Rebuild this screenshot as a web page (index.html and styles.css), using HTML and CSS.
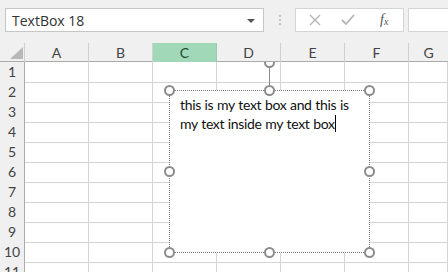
FILE: index.html
```html
<!DOCTYPE html>
<html lang="en">
<head>
    <meta charset="UTF-8">
    <title>TextBox 18</title>
    <link rel="stylesheet" href="styles.css">
</head>
<body>
    <div class="toolbar">
        <div class="name-box">
            <span class="name-text">TextBox 18</span>
            <span class="arrow"></span>
        </div>
        <div class="grip"><i></i><i></i><i></i></div>
        <div class="fx-buttons">
            <svg class="btn" width="12" height="12" viewBox="0 0 12 12"><path d="M1 1 L11 11 M11 1 L1 11" stroke="#b4b4b4" stroke-width="1.4" fill="none"/></svg>
            <svg class="btn" width="14" height="12" viewBox="0 0 14 12"><path d="M1 6 L5 10 L13 1" stroke="#b4b4b4" stroke-width="1.8" fill="none"/></svg>
            <span class="fx">f<sub>x</sub></span>
        </div>
        <div class="formula"></div>
    </div>

    <div class="sheet">
        <div class="head-row">
            <div class="corner"><span class="tri"></span></div>
            <div class="col-head">A</div>
            <div class="col-head">B</div>
            <div class="col-head selected">C</div>
            <div class="col-head">D</div>
            <div class="col-head">E</div>
            <div class="col-head">F</div>
            <div class="col-head last">G</div>
        </div>
        <div class="rows" id="rows">
            <div class="textbox">
                <div class="rotate-line"></div>
                <span class="handle h-rot"></span>
                <span class="handle h-tl"></span>
                <span class="handle h-tm"></span>
                <span class="handle h-tr"></span>
                <span class="handle h-ml"></span>
                <span class="handle h-mr"></span>
                <span class="handle h-bl"></span>
                <span class="handle h-bm"></span>
                <span class="handle h-br"></span>
                <p class="tb-text">this is my text box and this is my text inside my text box<span class="caret"></span></p>
            </div>
        </div>
    </div>

    <script>
        // строки таблицы 1..11
        const rows = document.getElementById('rows');
        for (let i = 1; i <= 11; i++) {
            const row = document.createElement('div');
            row.className = 'row';
            let html = '<div class="row-head">' + i + '</div>';
            for (let c = 0; c < 7; c++) {
                html += '<div class="cell"></div>';
            }
            row.innerHTML = html;
            rows.appendChild(row);
        }
    </script>
</body>
</html>
```

FILE: styles.css
```css
* {
    margin: 0;
    padding: 0;
    box-sizing: border-box;
}

body {
    width: 448px;
    height: 272px;
    overflow: hidden;
    background: #ffffff;
    font-family: Lato, 'Open Sans', sans-serif;
}

.toolbar {
    height: 43px;
    background: #f0f0f0;
    display: flex;
    align-items: flex-start;
    padding: 8px 0 0 5px;
}

.name-box {
    width: 259px;
    height: 24px;
    background: white;
    border: 1px solid #c6c6c6;
    display: flex;
    align-items: center;
    justify-content: space-between;
    padding: 0 8px 0 6px;
}

.name-text {
    font-family: 'Open Sans', sans-serif;
    font-size: 14px;
    color: #333;
}

.arrow {
    width: 0;
    height: 0;
    border-left: 4px solid transparent;
    border-right: 4px solid transparent;
    border-top: 4px solid #555;
    margin-top: 1px;
}

.grip {
    width: 31px;
    display: flex;
    flex-direction: column;
    align-items: center;
    gap: 2px;
    padding-top: 7px;
}

.grip i {
    width: 2px;
    height: 2px;
    background: #c4c4c4;
}

.fx-buttons {
    width: 109px;
    height: 24px;
    background: white;
    border: 1px solid #d4d4d4;
    display: flex;
    align-items: center;
    padding-left: 13px;
}

.btn {
    display: block;
}

.btn + .btn {
    margin-left: 20px;
}

.fx {
    margin-left: 25px;
    font-family: 'Liberation Serif', serif;
    font-style: italic;
    font-size: 14px;
    color: #555;
}

.fx sub {
    font-size: 10px;
    vertical-align: -1px;
}

.formula {
    flex: 1;
    height: 24px;
    margin-left: 4px;
    background: white;
    border: 1px solid #d4d4d4;
    border-right: none;
}

.sheet {
    position: relative;
}

.head-row {
    display: grid;
    grid-template-columns: 25px repeat(6, 64px) 1fr;
    height: 19px;
    background: #f0f0f0;
    border-bottom: 1px solid #ababab;
    position: relative;
    z-index: 2;
}

.corner {
    position: relative;
    border-right: 1px solid #d0d0d0;
}

.tri {
    position: absolute;
    left: 10px;
    top: 4px;
    width: 0;
    height: 0;
    border-left: 13px solid transparent;
    border-bottom: 12px solid #b8b8b8;
}

.col-head {
    border-right: 1px solid #d0d0d0;
    text-align: center;
    font-size: 14px;
    line-height: 19px;
    color: #444;
}

.col-head.selected {
    background: #a0d8b8;
    color: #1f4a33;
    border-right-color: #9cc8ae;
}

.col-head.last {
    border-right: none;
}

.rows {
    position: relative;
    overflow: hidden;
    height: 210px;
}

.row {
    display: grid;
    grid-template-columns: 25px repeat(6, 64px) 1fr;
    height: 20px;
}

.row-head {
    background: #f0f0f0;
    border-right: 1px solid #ababab;
    border-bottom: 1px solid #d4d4d4;
    text-align: center;
    font-size: 14px;
    line-height: 20px;
    color: #444;
}

.cell {
    border-right: 1px solid #d4d4d4;
    border-bottom: 1px solid #d4d4d4;
}

/* текстовое поле поверх ячеек */
.textbox {
    position: absolute;
    left: 169px;
    top: 28px;
    width: 201px;
    height: 163px;
    background: white;
    border: 1px dotted #7a7a7a;
    z-index: 1;
}

.tb-text {
    padding: 4px 4px 0 10px;
    font-size: 14px;
    letter-spacing: -0.35px;
    word-spacing: 0.5px;
    line-height: 19px;
    color: #111;
}

.caret {
    display: inline-block;
    width: 1px;
    height: 17px;
    background: #000;
    vertical-align: -3px;
}

.rotate-line {
    position: absolute;
    left: 99px;
    top: -24px;
    width: 1px;
    height: 19px;
    background: #8a8a8a;
}

.handle {
    position: absolute;
    width: 11px;
    height: 11px;
    border: 2px solid #8c8c8c;
    border-radius: 50%;
    background: white;
}

.h-rot { left: 94px; top: -34px; }
.h-tl { left: -6px; top: -6px; }
.h-tm { left: 94px; top: -6px; }
.h-tr { right: -6px; top: -6px; }
.h-ml { left: -6px; top: 75px; }
.h-mr { right: -6px; top: 75px; }
.h-bl { left: -6px; bottom: -6px; }
.h-bm { left: 94px; bottom: -6px; }
.h-br { right: -6px; bottom: -6px; }
```
